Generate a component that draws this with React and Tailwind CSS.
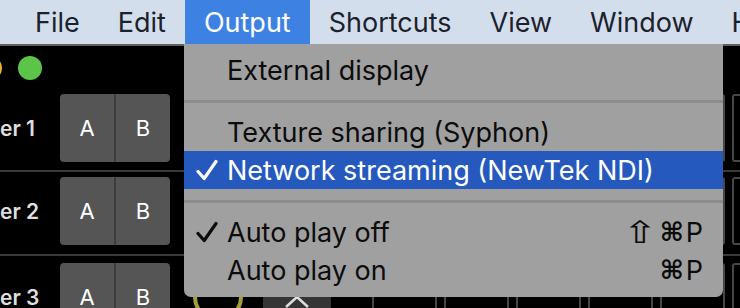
import React from "react";

function Check({ color }) {
  return (
    <svg width="22" height="22" viewBox="0 0 22 22" className="block">
      <path d="M2 12.5 L8.2 19.5 L20 2.5" fill="none" stroke={color} strokeWidth="3.2" strokeLinecap="round" strokeLinejoin="round" />
    </svg>
  );
}

function Shortcut({ shift }) {
  return (
    <div className="ml-auto flex items-center pr-[20px] whitespace-nowrap">
      {shift ? (
        <span className="mr-[7px] inline-block origin-center scale-x-[1.35] font-['DejaVu_Sans',sans-serif] text-[31px]">⇧</span>
      ) : null}
      <span className="font-['DejaVu_Sans',sans-serif] text-[26px] font-bold">⌘</span>
      <span className="ml-[2px]">P</span>
    </div>
  );
}

function MenuItem({ label, checked, active, shortcut, shift }) {
  return (
    <div className={`flex h-[38px] items-center ${active ? "bg-[#2559be] text-white" : "text-[#0c0c0c]"}`}>
      <div className="flex w-[43px] shrink-0 items-center pl-[12px]">
        {checked ? <Check color={active ? "#ffffff" : "#0c0c0c"} /> : null}
      </div>
      <div className="whitespace-nowrap">{label}</div>
      {shortcut ? <Shortcut shift={shift} /> : null}
    </div>
  );
}

function Sep() {
  return (
    <div className="flex h-[24px] items-center">
      <div className="h-[3px] w-full bg-[#8c8c8c]" />
    </div>
  );
}

function Pads() {
  return (
    <div className="ml-[41px] flex gap-[7px]">
      {[0, 1, 2, 3, 4, 5].map((i) => (
        <div key={i} className="h-[68px] w-[65px] shrink-0 rounded-[3px] border-2 border-[#474747]" />
      ))}
    </div>
  );
}

function Row({ label, pt }) {
  return (
    <div className={`flex items-start ${pt}`}>
      <div className="flex h-[68px] w-[60px] shrink-0 items-center pl-0 text-[21px] font-semibold text-[#dedede]">{label}</div>
      <div className="flex h-[68px] w-[110px] shrink-0 overflow-hidden rounded-[4px] bg-[#555555] text-[22px] text-white">
        <div className="flex flex-1 items-center justify-center border-r-2 border-[#3d3d3d]">A</div>
        <div className="flex flex-1 items-center justify-center">B</div>
      </div>
      <div className="ml-[23px] mt-[9px] h-[50px] w-[50px] shrink-0 rounded-full border-4 border-[#a49f38]" />
      <div className="ml-[20px] flex h-[68px] w-[68px] shrink-0 items-end justify-center rounded-[3px] bg-[#353535] pb-[22px]">
        <svg width="26" height="14" viewBox="0 0 26 14">
          <path d="M2 12 L13 2 L24 12" fill="none" stroke="#dddddd" strokeWidth="2.5" />
        </svg>
      </div>
      <Pads />
    </div>
  );
}

export default function App() {
  const items = ["File", "Edit", "Output", "Shortcuts", "View", "Window", "Help"];
  return (
    <div className="relative h-[308px] w-[740px] overflow-hidden bg-black font-[Inter,'DejaVu_Sans',sans-serif] leading-none">
      <div className="flex h-[46px] border-b-2 border-[#5e5e5e] bg-[#d3deec] pl-[16px] text-[27px] text-[#1b222d]">
        {items.map((it) => (
          <div
            key={it}
            className={`flex shrink-0 items-center px-[19px] whitespace-nowrap ${it === "Output" ? "bg-[#3d82e3] text-white" : ""}`}
          >
            {it}
          </div>
        ))}
      </div>
      <div className="flex h-[44px] items-center">
        <div className="ml-[-22px] h-[24px] w-[24px] shrink-0 rounded-full bg-[#f2b233]" />
        <div className="ml-[16px] h-[24px] w-[24px] shrink-0 rounded-full bg-[#5dc44a]" />
      </div>
      <div className="h-[80px]">
        <Row label="er 1" pt="pt-[4px]" />
      </div>
      <div className="h-[2px] bg-[#3a3a3a]" />
      <div className="h-[82px]">
        <Row label="er 2" pt="pt-[5px]" />
      </div>
      <div className="h-[2px] bg-[#3a3a3a]" />
      <Row label="er 3" pt="pt-[7px]" />

      <div className="absolute left-[184px] top-[44px] h-[253px] w-[539px] rounded-b-[7px] bg-[#a0a0a0] pt-[7px] text-[27px]">
        <MenuItem label="External display" />
        <Sep />
        <MenuItem label="Texture sharing (Syphon)" />
        <MenuItem label="Network streaming (NewTek NDI)" checked active />
        <Sep />
        <MenuItem label="Auto play off" checked shortcut shift />
        <MenuItem label="Auto play on" shortcut />
      </div>
    </div>
  );
}
